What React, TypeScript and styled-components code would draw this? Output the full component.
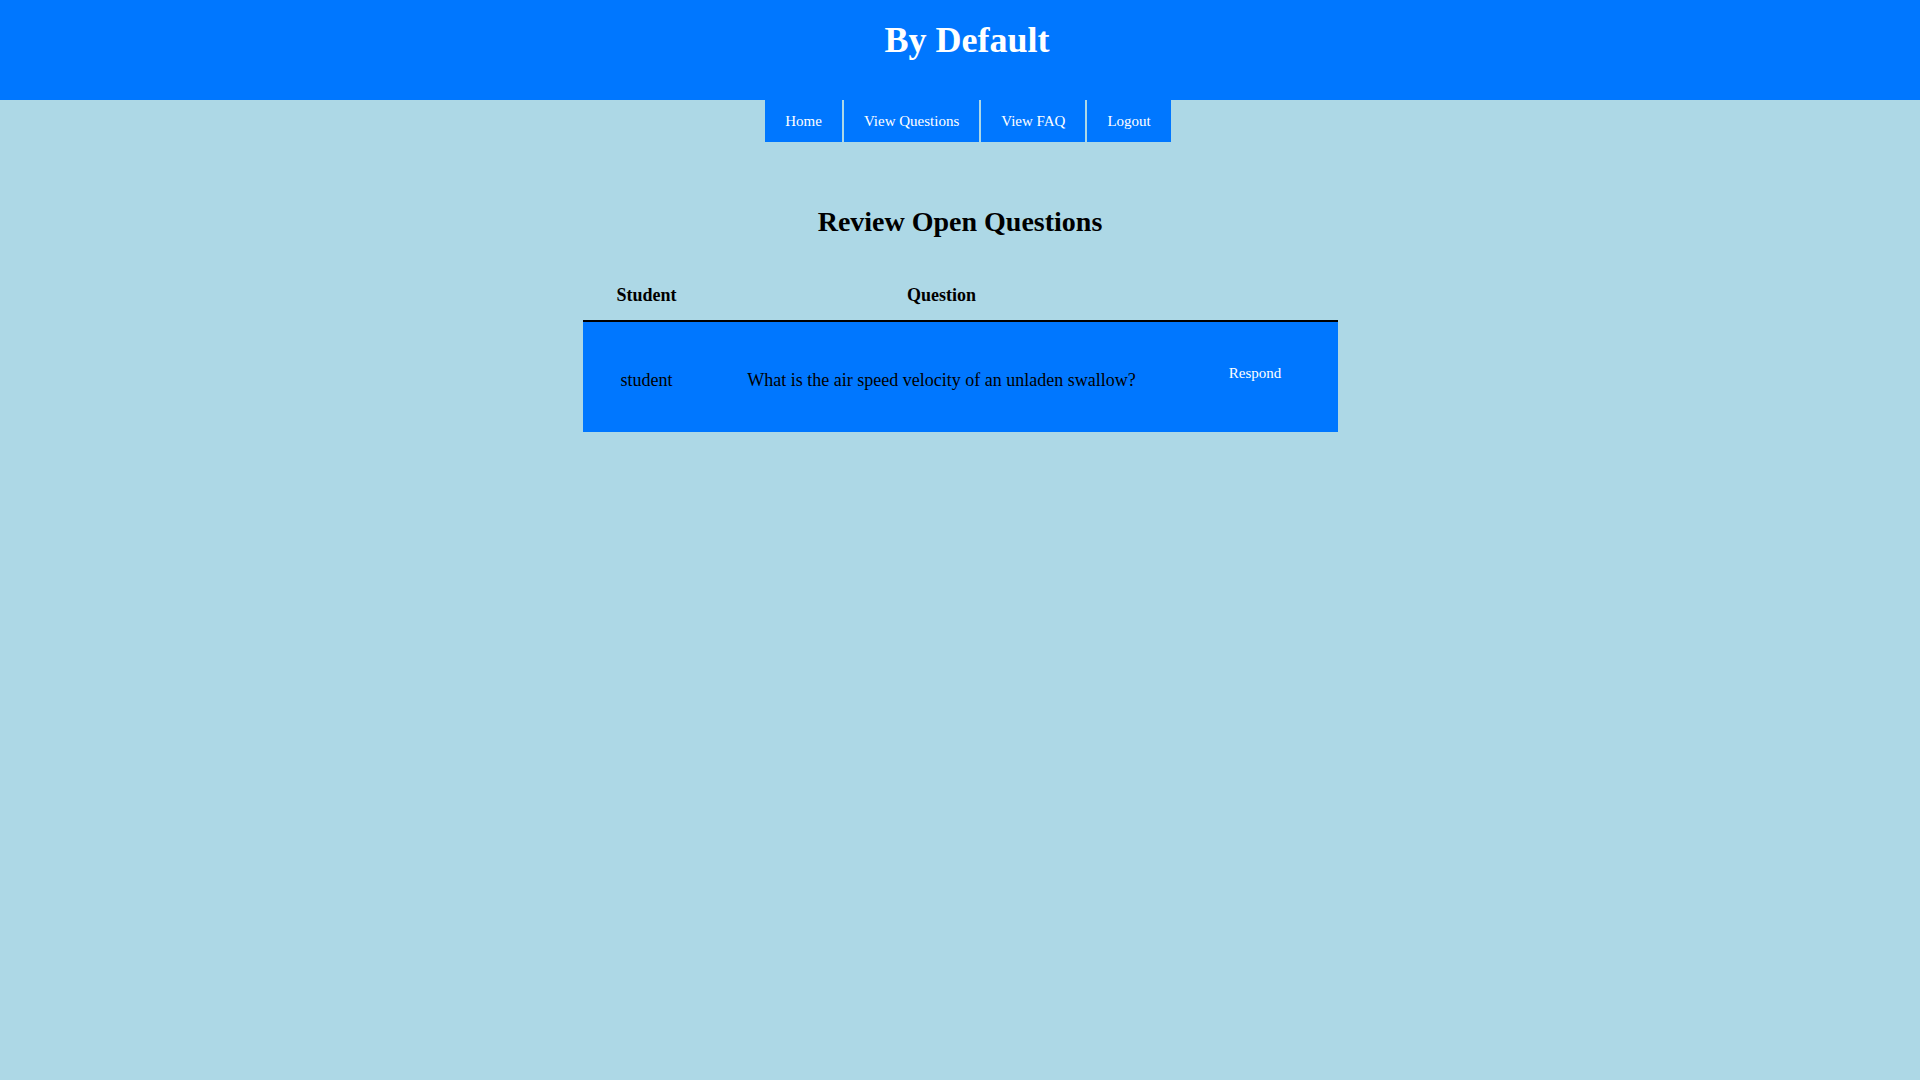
import React from "react";
import styled, { createGlobalStyle } from "styled-components";

const GlobalStyle = createGlobalStyle`
  html, body {
    margin: 0;
    padding: 0;
    background: #add8e6;
    font-family: "Liberation Serif", "Times New Roman", serif;
    color: #000;
  }
  #root {
    min-height: 100vh;
    background: #add8e6;
  }
`;

const BLUE = "#0077ff";

const Header = styled.header`
  height: 100px;
  background: ${BLUE};
  box-sizing: border-box;
  padding-top: 22px;
  text-align: center;
`;

const Title = styled.h1`
  margin: 0;
  font-size: 36px;
  line-height: 36px;
  font-weight: 700;
  color: #fff;
  padding-left: 14px;
`;

const Nav = styled.nav`
  display: flex;
  justify-content: center;
  gap: 2px;
  padding-left: 16px;
`;

const NavLink = styled.a`
  display: block;
  height: 42px;
  line-height: 42px;
  padding: 0 20px;
  background: ${BLUE};
  color: #fff;
  font-size: 15px;
  text-decoration: none;
  cursor: pointer;
`;

const Main = styled.main`
  display: flex;
  flex-direction: column;
  align-items: center;
  padding-top: 63px;
`;

const Heading = styled.h2`
  margin: 0;
  font-size: 28px;
  line-height: 34px;
  font-weight: 700;
`;

const Table = styled.table`
  margin-top: 31px;
  width: 755px;
  border-collapse: collapse;
  table-layout: fixed;
`;

const HeadCell = styled.th`
  padding: 14px 0 14px;
  font-size: 18px;
  line-height: 22px;
  font-weight: 700;
  text-align: center;
  border-bottom: 2px solid #000;
`;

const BodyRow = styled.tr`
  background: ${BLUE};
  height: 111px;
`;

const Cell = styled.td`
  padding: 0;
  font-size: 18px;
  line-height: 22px;
  text-align: center;
  vertical-align: middle;
  padding-top: 5px;
`;

const RespondButton = styled.button`
  background: ${BLUE};
  border: none;
  color: #fff;
  font-family: "Liberation Serif", "Times New Roman", serif;
  font-size: 15px;
  line-height: 18px;
  padding: 0;
  margin-bottom: 16px;
  cursor: pointer;
`;

const links = ["Home", "View Questions", "View FAQ", "Logout"];

export default function App() {
  return (
    <>
      <GlobalStyle />
      <Header>
        <Title>By Default</Title>
      </Header>
      <Nav>
        {links.map((l) => (
          <NavLink key={l}>{l}</NavLink>
        ))}
      </Nav>
      <Main>
        <Heading>Review Open Questions</Heading>
        <Table>
          <colgroup>
            <col style={{ width: 128 }} />
            <col style={{ width: 462 }} />
            <col style={{ width: 165 }} />
          </colgroup>
          <thead>
            <tr>
              <HeadCell>Student</HeadCell>
              <HeadCell>Question</HeadCell>
              <HeadCell />
            </tr>
          </thead>
          <tbody>
            <BodyRow>
              <Cell>student</Cell>
              <Cell>What is the air speed velocity of an unladen swallow?</Cell>
              <Cell>
                <RespondButton>Respond</RespondButton>
              </Cell>
            </BodyRow>
          </tbody>
        </Table>
      </Main>
    </>
  );
}
